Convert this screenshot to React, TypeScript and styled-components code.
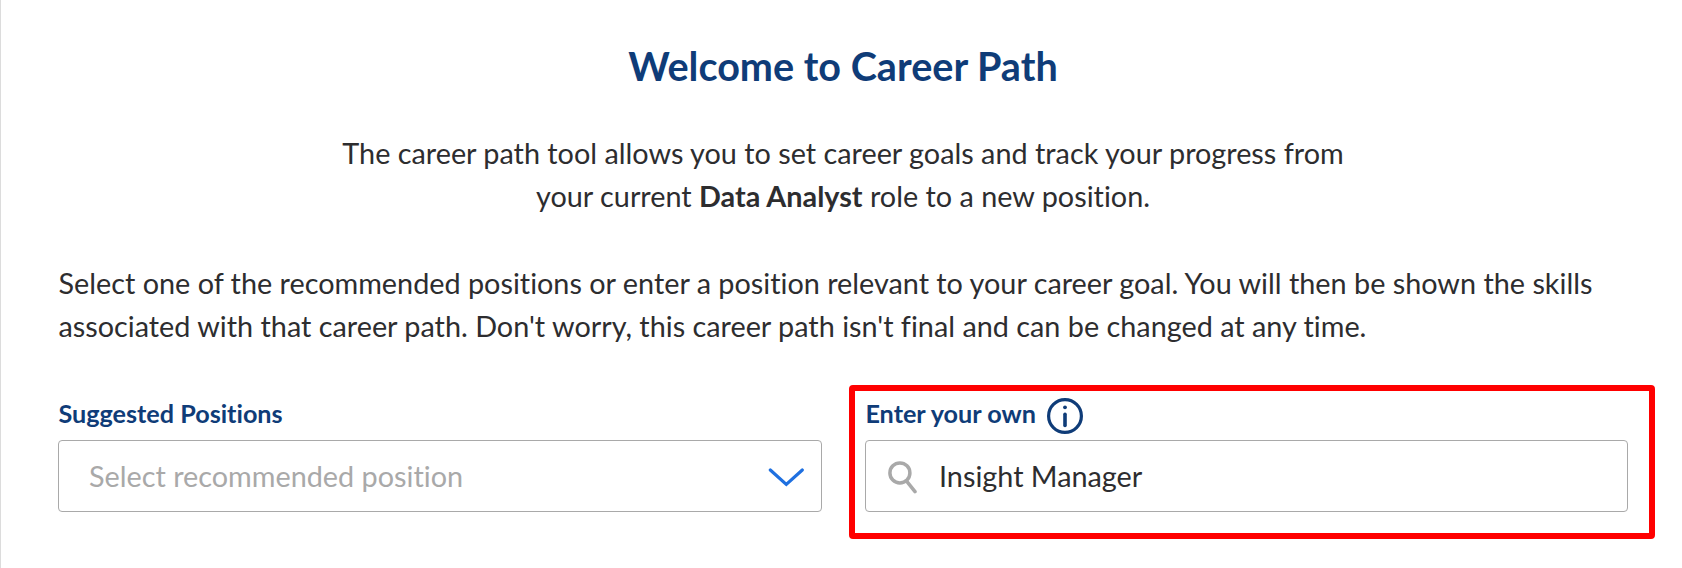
import React from "react";
import styled, { createGlobalStyle } from "styled-components";

const navy = "#0f3c78";
const grey = "#a9a9a9";

const GlobalStyle = createGlobalStyle`
  * { box-sizing: border-box; }
  body { margin: 0; background: #fff; }
`;

const Page = styled.main`
  height: 568px;
  overflow: hidden;
  border-left: 1px solid #dcdcdc;
  padding: 42px 54px 0 57px;
  font-family: Lato, "Open Sans", sans-serif;
  font-size: 28.8px;
  line-height: 43px;
  font-variant-ligatures: none;
  color: #2d2d2f;
`;

const Title = styled.h1`
  margin: 0 0 42px;
  font-size: 39.6px;
  line-height: 48px;
  font-weight: 700;
  text-align: center;
  color: ${navy};
`;

const Intro = styled.p`
  margin: 0 0 44px;
  text-align: center;
`;

const Guide = styled.p`
  margin: 0 -40px 0 0;
  padding-left: 0.5px;
`;

const Line = styled.span`
  display: block;
  white-space: nowrap;
`;

const Fields = styled.div`
  display: grid;
  grid-template-columns: 764px 806px;
  column-gap: 27px;
  align-items: start;
  margin-top: 37px;
`;

const Field = styled.div<{ $highlighted?: boolean }>`
  height: 154px;
  border: 6px solid ${(p) => (p.$highlighted ? "#ff0000" : "transparent")};
  border-width: ${(p) => (p.$highlighted ? "6px" : "6px 0")};
  border-radius: 4px;
  padding: ${(p) => (p.$highlighted ? "3px 21px 0 10px" : "3px 0 0")};
`;

const LabelRow = styled.div`
  display: flex;
  align-items: center;
  gap: 11px;
  height: 46px;
  padding-bottom: 2px;
`;

const Label = styled.label`
  font-size: 25.2px;
  line-height: 38px;
  font-weight: 700;
  color: ${navy};
  padding: 0 0 6px 0.4px;
`;

const Control = styled.div<{ $paddingLeft: number }>`
  display: flex;
  align-items: center;
  height: 72px;
  border: 1px solid ${grey};
  border-radius: 4px;
  padding: 2px 17px 0 ${(p) => p.$paddingLeft}px;
`;

const Placeholder = styled.span`
  flex: 1;
  margin-bottom: 1px;
  color: ${grey};
`;

const Value = styled.span`
  margin: 0 0 1px 21px;
`;

const Icon = styled.svg`
  display: block;
  flex: none;
  fill: none;
`;

const InfoIcon = () => (
  <Icon width="36" height="36" viewBox="0 0 36 36" stroke={navy}>
    <circle cx="18" cy="18" r="16.4" strokeWidth="3.2" />
    <path d="M18 16.2v11.2" strokeWidth="3.6" strokeLinecap="round" />
    <circle cx="18" cy="9.3" r="1.9" fill={navy} stroke="none" />
  </Icon>
);

const ChevronIcon = () => (
  <Icon width="36" height="20" viewBox="0 0 36 20" stroke="#1f70e0">
    <path d="M2.3 3 18.3 17.4 34.3 3" strokeWidth="3.2" strokeLinecap="round" />
  </Icon>
);

const SearchIcon = () => (
  <Icon width="30" height="34" viewBox="0 0 30 34" stroke={grey}>
    <circle cx="11.9" cy="12.9" r="10" strokeWidth="3.5" />
    <path d="M18.8 21.3 27 31.6" strokeWidth="3.5" strokeLinecap="round" />
  </Icon>
);

export default function App() {
  return (
    <>
      <GlobalStyle />
      <Page>
        <Title>Welcome to Career Path</Title>
        <Intro>
          <Line>The career path tool allows you to set career goals and track your progress from</Line>
          <Line>
            your current <strong>Data Analyst</strong> role to a new position.
          </Line>
        </Intro>
        <Guide>
          <Line>
            Select one of the recommended positions or enter a position relevant to your career goal. You will then be
            shown the skills
          </Line>
          <Line>
            associated with that career path. Don't worry, this career path isn't final and can be changed at any time.
          </Line>
        </Guide>
        <Fields>
          <Field>
            <LabelRow>
              <Label>Suggested Positions</Label>
            </LabelRow>
            <Control $paddingLeft={30}>
              <Placeholder>Select recommended position</Placeholder>
              <ChevronIcon />
            </Control>
          </Field>
          <Field $highlighted>
            <LabelRow>
              <Label>Enter your own</Label>
              <InfoIcon />
            </LabelRow>
            <Control $paddingLeft={22}>
              <SearchIcon />
              <Value>Insight Manager</Value>
            </Control>
          </Field>
        </Fields>
      </Page>
    </>
  );
}
